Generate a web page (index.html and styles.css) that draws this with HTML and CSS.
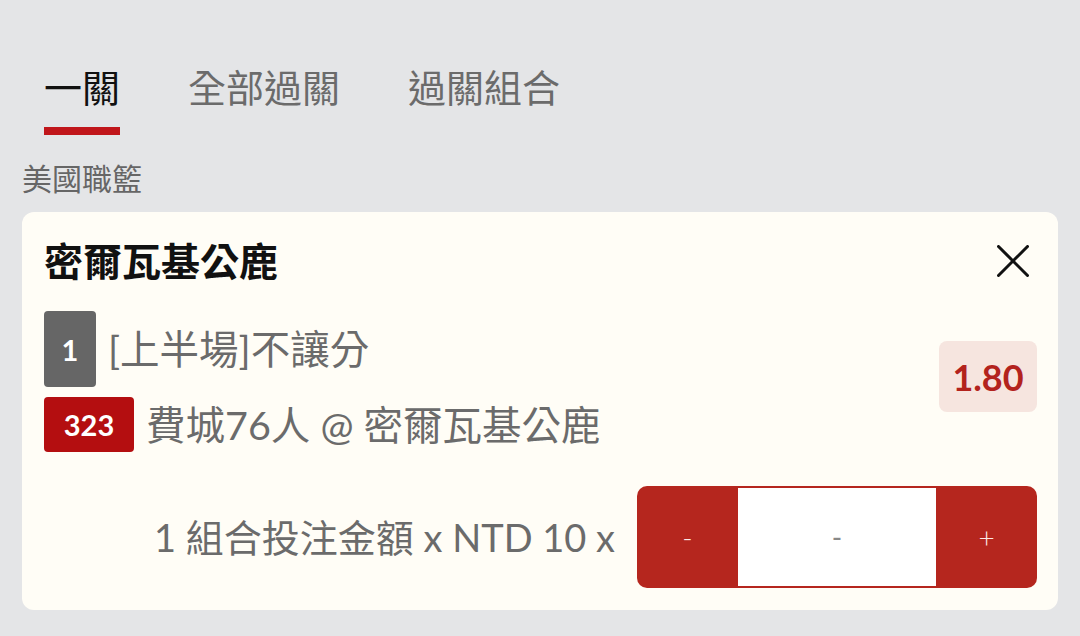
FILE: index.html
```html
<!DOCTYPE html>
<html lang="zh-Hant">
<head>
<meta charset="utf-8">
<link rel="stylesheet" href="styles.css">
</head>
<body>
<div class="page">
  <nav class="tabs">
    <div class="tab active">一關</div>
    <div class="tab">全部過關</div>
    <div class="tab">過關組合</div>
  </nav>
  <div class="league">美國職籃</div>
  <section class="card">
    <div class="card-head">
      <h2 class="title">密爾瓦基公鹿</h2>
      <svg class="close" viewBox="0 0 32 32" width="32" height="32"><path d="M1.5 1.5 L30.5 30.5 M30.5 1.5 L1.5 30.5" stroke="#111" stroke-width="3" stroke-linecap="round" fill="none"/></svg>
    </div>
    <div class="pick">
      <div class="pick-info">
        <div class="pick-row">
          <span class="badge badge-gray">1</span>
          <span class="pick-text">[上半場]不讓分</span>
        </div>
        <div class="pick-row">
          <span class="badge badge-red">323</span>
          <span class="pick-text">費城76人 @ 密爾瓦基公鹿</span>
        </div>
      </div>
      <div class="odds">1.80</div>
    </div>
    <div class="stake">
      <span class="stake-text">1 組合投注金額 x NTD 10 x</span>
      <div class="stepper">
        <button class="step">-</button>
        <div class="step-value">-</div>
        <button class="step">+</button>
      </div>
    </div>
  </section>
</div>
</body>
</html>
```
FILE: styles.css
```css
* { box-sizing: border-box; }
html, body { margin: 0; padding: 0; }
body {
  background: #e4e5e7;
  font-family: Lato, "Noto Sans CJK TC", sans-serif;
  width: 1080px;
  height: 636px;
  overflow: hidden;
}
.page { padding-top: 64px; }
.tabs {
  display: flex;
  gap: 68px;
  padding-left: 44px;
}
.tab {
  font-size: 38px;
  line-height: 46px;
  color: #6b6b6b;
  padding-bottom: 17px;
  border-bottom: 8px solid transparent;
}
.tab.active {
  color: #111;
  border-bottom-color: #c0161b;
}
.league {
  margin: 25px 0 0 22px;
  font-size: 30px;
  line-height: 36px;
  color: #666;
}
.card {
  margin: 16px 22px 0 22px;
  background: #fffdf6;
  border-radius: 12px;
  padding: 26px 21px 22px 22px;
}
.card-head {
  display: flex;
  justify-content: space-between;
  align-items: center;
}
.title {
  margin: 0;
  font-size: 39px;
  line-height: 46px;
  font-weight: 700;
  color: #111;
}
.close { margin-right: 8px; }
.pick {
  display: flex;
  align-items: center;
  justify-content: space-between;
  margin-top: 27px;
}
.pick-info {
  display: flex;
  flex-direction: column;
  gap: 10px;
}
.pick-row {
  display: flex;
  align-items: center;
  gap: 12px;
}
.badge {
  display: flex;
  align-items: center;
  justify-content: center;
  color: #fff;
  font-size: 29px;
  font-weight: 700;
  border-radius: 4px;
}
.badge-gray {
  background: #666;
  width: 52px;
  height: 76px;
}
.badge-red {
  background: #b40e10;
  width: 90px;
  height: 55px;
}
.pick-text {
  font-size: 39.5px;
  color: #6b6b6b;
  line-height: 46px;
}
.odds {
  width: 98px;
  height: 71px;
  border-radius: 8px;
  background: #f6e5df;
  color: #b3231d;
  font-size: 36px;
  font-weight: 700;
  display: flex;
  align-items: center;
  justify-content: center;
  margin-bottom: 10px;
}
.stake {
  display: flex;
  justify-content: flex-end;
  align-items: center;
  gap: 22px;
  margin-top: 34px;
}
.stake-text {
  font-size: 38px;
  color: #6b6b6b;
  margin-bottom: 4px;
}
.stepper {
  display: flex;
  width: 400px;
  height: 102px;
  background: #b5261e;
  border-radius: 10px;
  padding: 2px 0;
}
.step {
  width: 101px;
  border: 0;
  background: transparent;
  color: #fbe9e7;
  font-family: Lato, sans-serif;
  font-size: 28px;
  font-weight: 300;
  padding: 0;
}
.step-value {
  width: 198px;
  background: #fff;
  color: #888;
  font-size: 28px;
  display: flex;
  align-items: center;
  justify-content: center;
}
```
